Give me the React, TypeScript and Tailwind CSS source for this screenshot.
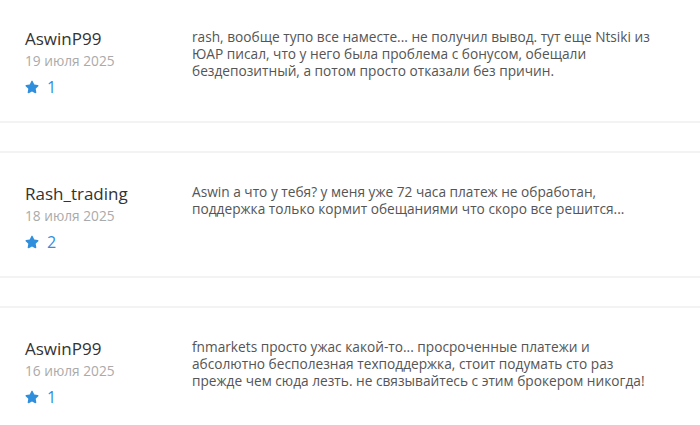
import React from "react";
import { FaStar } from "react-icons/fa";

interface comment {
  author: string;
  date: string;
  rating: number;
  text: string;
}

const comments: comment[] = [
  {
    author: "AswinP99",
    date: "19 июля 2025",
    rating: 1,
    text: "rash, вообще тупо все наместе... не получил вывод. тут еще Ntsiki из ЮАР писал, что у него была проблема с бонусом, обещали бездепозитный, а потом просто отказали без причин.",
  },
  {
    author: "Rash_trading",
    date: "18 июля 2025",
    rating: 2,
    text: "Aswin а что у тебя? у меня уже 72 часа платеж не обработан, поддержка только кормит обещаниями что скоро все решится...",
  },
  {
    author: "AswinP99",
    date: "16 июля 2025",
    rating: 1,
    text: "fnmarkets просто ужас какой-то... просроченные платежи и абсолютно бесполезная техподдержка, стоит подумать сто раз прежде чем сюда лезть. не связывайтесь с этим брокером никогда!",
  },
];

function CommentRow({ author, date, rating, text }: comment) {
  return (
    <div className="flex flex-row bg-white border-y-2 border-[#f3f3f3] pl-[25px] pt-[30px] pb-[24px]">
      <div className="flex flex-col w-[167px] shrink-0">
        <p className="text-[17px] leading-[22px] text-[#333]">{author}</p>
        <p className="text-[13.7px] leading-[20px] text-[#aaa] mt-[1px]">{date}</p>
        <div className="flex flex-row items-center gap-[8px] mt-[6px] text-[#2f8fdd]">
          <FaStar className="w-[14px] h-[14px]" />
          <span className="text-[16px] leading-[20px]">{rating}</span>
        </div>
      </div>
      <p className="w-[470px] text-[13.7px] leading-[17px] text-[#555]">
        {text}
      </p>
    </div>
  );
}

export default function App() {
  return (
    <div className="bg-white w-[700px] h-[425px] overflow-hidden font-['Open_Sans',sans-serif]">
      <div className="flex flex-col gap-[28px] -mt-[4px]">
        {comments.map((c, i) => (
          <CommentRow key={i} {...c} />
        ))}
      </div>
    </div>
  );
}
